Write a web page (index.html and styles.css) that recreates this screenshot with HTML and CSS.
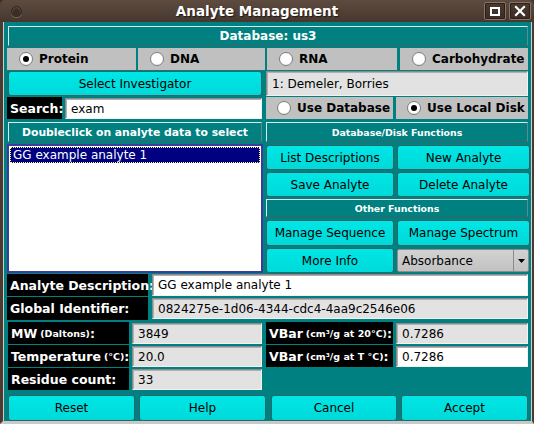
FILE: index.html
```html
<!DOCTYPE html>
<html>
<head>
<meta charset="utf-8">
<link rel="stylesheet" href="styles.css">
</head>
<body>
<div class="win">
  <div class="titlebar">
    <span class="tb-dot"></span>
    <span class="tb-title">Analyte Management</span>
    <span class="tb-btns">
      <span class="tb-btn"><span class="max-box"></span></span>
      <span class="tb-btn close">
        <svg width="12" height="12" viewBox="0 0 12 12"><path d="M2 2 L10 10 M10 2 L2 10" stroke="#fff" stroke-width="2.2" stroke-linecap="square"/></svg>
      </span>
    </span>
  </div>
  <div class="body">
    <div class="hdr hdr-db">Database: us3</div>

    <div class="row radio-row">
      <div class="rcell"><span class="radio on"></span>Protein</div>
      <div class="rcell"><span class="radio"></span>DNA</div>
      <div class="rcell"><span class="radio"></span>RNA</div>
      <div class="rcell"><span class="radio"></span>Carbohydrate</div>
    </div>

    <div class="row two inv-row">
      <div class="btn">Select Investigator</div>
      <div class="field grey">1: Demeler, Borries</div>
    </div>

    <div class="row two search-row">
      <div class="search">
        <div class="lbl search-lbl">Search:</div>
        <div class="field white">exam</div>
      </div>
      <div class="pair">
        <div class="rcell"><span class="radio"></span>Use Database</div>
        <div class="rcell"><span class="radio on"></span>Use Local Disk</div>
      </div>
    </div>

    <div class="row two hdr-row">
      <div class="hdr hdr-left">Doubleclick on analyte data to select</div>
      <div class="hdr hdr-small">Database/Disk Functions</div>
    </div>

    <div class="row two mid">
      <div class="listbox">
        <div class="item sel">GG example analyte 1</div>
      </div>
      <div class="funcs">
        <div class="pair btns">
          <div class="btn">List Descriptions</div>
          <div class="btn">New Analyte</div>
        </div>
        <div class="pair btns">
          <div class="btn">Save Analyte</div>
          <div class="btn">Delete Analyte</div>
        </div>
        <div class="hdr hdr-small other">Other Functions</div>
        <div class="pair btns tall">
          <div class="btn">Manage Sequence</div>
          <div class="btn">Manage Spectrum</div>
        </div>
        <div class="pair btns last">
          <div class="btn">More Info</div>
          <div class="combo"><span class="combo-text">Absorbance</span><span class="combo-arrow"><svg width="9" height="6" viewBox="0 0 9 6"><path d="M1 1 H8 L4.5 5 Z" fill="#000"/></svg></span></div>
        </div>
      </div>
    </div>

    <div class="row desc-row">
      <div class="lbl">Analyte Description:</div>
      <div class="field white">GG example analyte 1</div>
    </div>
    <div class="row desc-row gid">
      <div class="lbl">Global Identifier:</div>
      <div class="field grey">0824275e-1d06-4344-cdc4-4aa9c2546e06</div>
    </div>

    <div class="row props first">
      <div class="lbl">MW <small>(Daltons)</small>:</div>
      <div class="field grey">3849</div>
      <div class="lbl">VBar <small>(cm³/g at 20°C)</small>:</div>
      <div class="field grey">0.7286</div>
    </div>
    <div class="row props">
      <div class="lbl">Temperature <small>(°C)</small>:</div>
      <div class="field grey">20.0</div>
      <div class="lbl">VBar <small>(cm³/g at T °C)</small>:</div>
      <div class="field white">0.7286</div>
    </div>
    <div class="row props">
      <div class="lbl">Residue count:</div>
      <div class="field grey">33</div>
    </div>

    <div class="row bottom">
      <div class="btn">Reset</div>
      <div class="btn">Help</div>
      <div class="btn">Cancel</div>
      <div class="btn">Accept</div>
    </div>
  </div>
</div>
</body>
</html>
```
FILE: styles.css
```css
* { box-sizing: border-box; }
html, body { margin: 0; padding: 0; }
body {
  width: 534px; height: 424px; overflow: hidden;
  font-family: "DejaVu Sans", sans-serif; font-size: 12px; color: #000;
  background: #3b2f27;
}
.win { width: 534px; height: 424px; display: flex; flex-direction: column; }

.titlebar {
  height: 22px; flex: none;
  background: linear-gradient(#5e4b3f, #46372e);
  border-radius: 5px 5px 0 0;
  display: flex; align-items: center;
  color: #fff;
}
.tb-dot {
  width: 11px; height: 11px; border-radius: 50%;
  margin-left: 11px;
  background: radial-gradient(circle at 50% 60%, #3a2d25 40%, #5b4a3f 75%);
  border: 1px solid #2f241e;
  box-shadow: 0 1px 0 #7a6556;
}
.tb-title {
  flex: 1; text-align: center; font-weight: bold; font-size: 13.5px;
  text-shadow: 1px 1px 1px #1f1813; padding-left: 8px; margin-top: -1px;
}
.tb-btns { display: flex; gap: 3px; margin-right: 3px; }
.tb-btn {
  width: 22px; height: 18px; border: 1px solid #8a7565; border-radius: 2px;
  background: linear-gradient(#4a3a31, #3a2d25);
  display: flex; align-items: center; justify-content: center;
  box-shadow: inset 0 0 0 1px #2a201b;
}
.max-box { width: 10px; height: 9px; border: 2px solid #fff; }

.body {
  flex: 1; background: #008080;
  border-left: 3px solid #4a3b31; border-right: 2px solid #4a3b31;
  border-bottom: 3px solid #c9c9c9;
  box-shadow: inset 1px 0 0 #cfcfcf, inset -1px 0 0 #cfcfcf;
  padding: 4px 3px 0 4px;
  display: flex; flex-direction: column;
}
.row { display: grid; flex: none; }
.two { grid-template-columns: 256px 263px; column-gap: 3px; }

.hdr {
  background: #008080; color: #fff; font-weight: bold;
  border: 1px solid; border-color: #d8eaea #5a8c8c #3c6464 #d8eaea;
  display: flex; align-items: center; justify-content: center;
  white-space: nowrap;
}
.hdr-db { height: 20px; margin: 0 1px; font-size: 12px; flex: none; }
.hdr-left { font-size: 10.8px; height: 20px; margin: 0 1px; }
.hdr-small { font-size: 9.4px; height: 20px; margin-right: 1px; }

.radio-row {
  grid-template-columns: 129px 127px 130px 129px; column-gap: 2px;
  margin-top: 2px; height: 22px;
}
.radio-row .rcell:nth-child(4) { margin-left: 1px; }
.rcell {
  background: #c0c0c0; display: flex; align-items: center; font-weight: bold;
  font-size: 12px; padding-left: 12px; gap: 6px; height: 22px; white-space: nowrap;
}
.radio {
  width: 14px; height: 14px; border-radius: 50%; flex: none;
  background: radial-gradient(circle at 50% 40%, #fff 55%, #e6e6e6 100%);
  border: 1px solid #7e7e7e; position: relative;
}
.radio.on::after {
  content: ""; position: absolute; left: 3px; top: 3px; width: 6px; height: 6px;
  border-radius: 50%; background: #000;
}

.inv-row { margin-top: 1px; height: 25px; }
.btn {
  background: linear-gradient(#00e6e6, #00d9d9);
  border: 1px solid #2e6666; border-radius: 3px;
  display: flex; align-items: center; justify-content: center;
  font-size: 12px; white-space: nowrap;
}
.inv-row .btn { margin: 0 1px; }
.field {
  border: 1px solid; border-color: #8a8a8a #f2f2f2 #f2f2f2 #8a8a8a;
  box-shadow: inset 1px 1px 0 #b0b0b0;
  display: flex; align-items: center; padding-left: 5px; font-size: 12px;
  white-space: nowrap; overflow: hidden;
}
.grey { background: #e2e2e2; }
.white { background: #fff; }
.inv-row .field { margin-right: 1px; }

.search-row { margin-top: 1px; height: 22px; }
.search { display: grid; grid-template-columns: 55px 1fr; column-gap: 3px; }
.search .field { margin-right: 1px; height: 21px; margin-top: 1px; }
.lbl {
  background: #000; color: #fff; font-weight: bold; font-size: 12.5px;
  display: flex; align-items: center; padding-left: 3px; white-space: nowrap;
}
.lbl small { font-size: 9.5px; margin-left: 3px; }
.pair { display: grid; grid-template-columns: 127px 132px; column-gap: 3px; }
.pair .rcell { padding-left: 11px; }

.hdr-row { margin-top: 3px; height: 20px; }

.mid { margin-top: 2px; height: 128px; }
.listbox {
  background: #fff; border: 2px solid #3b3b9c; padding: 1px;
}
.item { height: 16px; font-size: 12px; padding-left: 3px; display: flex; align-items: center; }
.item.sel { background: #000080; color: #fff; outline: 1px dotted #ffff80; outline-offset: -1px; }
.funcs { display: flex; flex-direction: column; padding-top: 1px; }
.funcs .pair { grid-template-columns: 128px 133px; }
.btns { height: 25px; flex: none; }
.funcs .btns + .btns { margin-top: 2px; }
.other { height: 18px; margin-top: 2px; flex: none; }
.funcs .tall { margin-top: 3px; height: 26px; }
.funcs .last { margin-top: 1px; }
.combo {
  background: linear-gradient(#d2d2d2, #c2c2c2); border: 1px solid #8c8c8c; border-radius: 2px;
  display: flex; align-items: stretch; margin: 1px 1px 1px 0; font-size: 12px;
}
.combo-text { flex: 1; display: flex; align-items: center; padding-left: 4px; }
.combo-arrow { width: 15px; border-left: 1px solid #8c8c8c; display: flex; align-items: center; justify-content: center; }

.desc-row { grid-template-columns: 141px 1fr; column-gap: 4px; height: 22px; margin-top: 2px; }
.desc-row .field { margin-right: 1px; }
.gid { height: 23px; margin-top: 1px; }
.gid .field { margin: 1px 1px 1px 0; }

.props {
  grid-template-columns: 121px 130px 128px 132px; column-gap: 3px;
  height: 23px; margin-left: 1px;
}
.props.first { margin-top: 2px; }
.props .lbl { margin-bottom: 1px; }
.props .field { margin: 1px 0; }
.props .lbl:nth-child(3) { margin-left: 1px; }

.bottom {
  grid-template-columns: 127px 127px 127px 127px; column-gap: 4px;
  height: 26px; margin-top: 4px; margin-left: 1px;
}
.bottom .btn:nth-child(3) { margin-left: 1px; }
```
